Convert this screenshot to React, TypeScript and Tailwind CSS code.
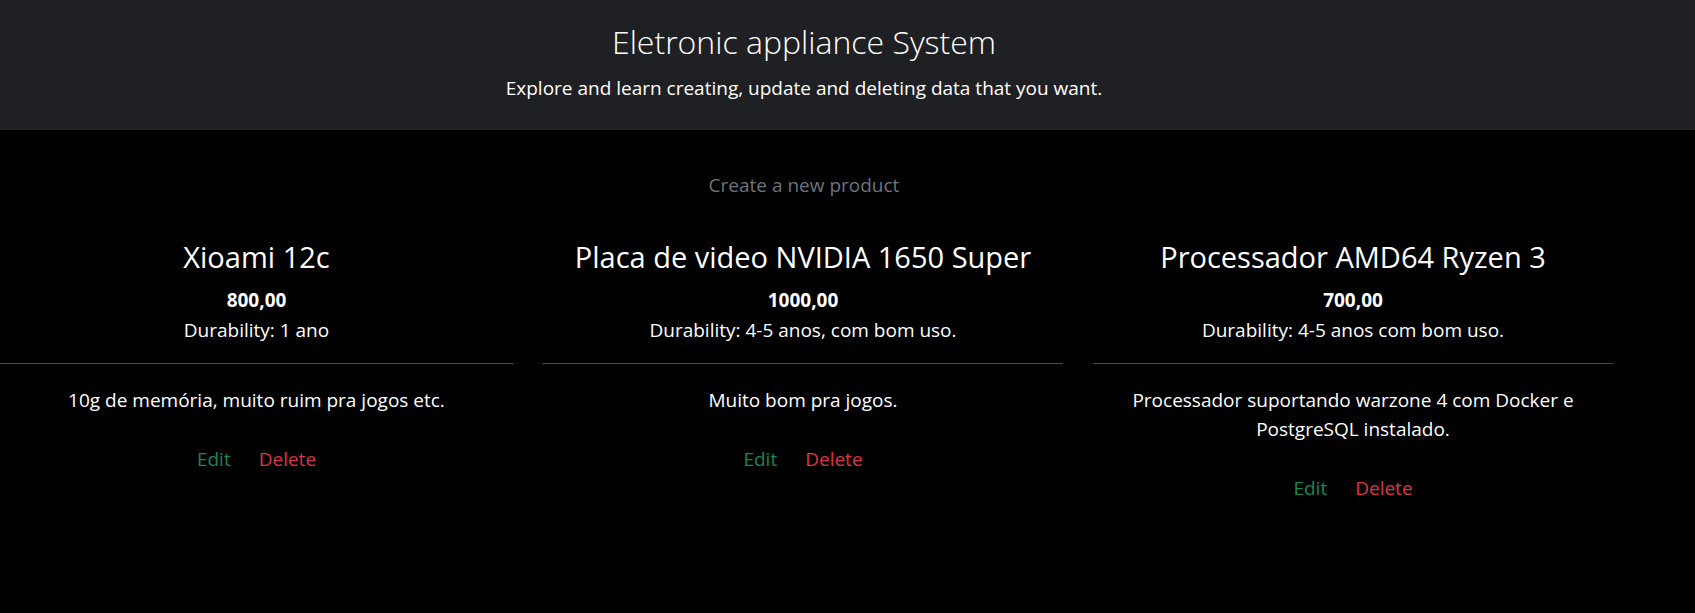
import React from "react";

interface Product {
  name: string;
  price: string;
  durability: string;
  description: string;
}

const products: Product[] = [
  {
    name: "Xioami 12c",
    price: "800,00",
    durability: "1 ano",
    description: "10g de memória, muito ruim pra jogos etc.",
  },
  {
    name: "Placa de video NVIDIA 1650 Super",
    price: "1000,00",
    durability: "4-5 anos, com bom uso.",
    description: "Muito bom pra jogos.",
  },
  {
    name: "Processador AMD64 Ryzen 3",
    price: "700,00",
    durability: "4-5 anos com bom uso.",
    description:
      "Processador suportando warzone 4 com Docker e PostgreSQL instalado.",
  },
];

const ProductCard = ({ product }: { product: Product }) => (
  <div className="flex flex-col text-center text-white">
    <h3 className="mt-[38px] text-[29px] leading-[40px] font-normal">
      {product.name}
    </h3>
    <p className="mt-[10px] text-[19px] leading-[26px] font-bold">
      {product.price}
    </p>
    <p className="mt-[4px] text-[19px] leading-[26px]">
      Durability: {product.durability}
    </p>
    <hr className="mt-[20px] border-0 border-t border-[#4b4b4b]" />
    <p className="mt-[22px] px-4 text-[19px] leading-[29px]">
      {product.description}
    </p>
    <div className="mt-[30px] flex justify-center gap-[28px] text-[19px] leading-[28px]">
      <a href="#" className="text-[#198754]">
        Edit
      </a>
      <a href="#" className="text-[#dc3545]">
        Delete
      </a>
    </div>
  </div>
);

export default function App() {
  return (
    <div className="min-h-[613px] bg-black font-['Open_Sans',sans-serif]">
      <header className="h-[130px] bg-[#1f2023]">
        <div className="w-[1608px] pt-[18px] text-center text-white">
          <h1 className="text-[32px] leading-[48px] font-light">
            Eletronic appliance System
          </h1>
          <p className="mt-[8px] text-[19px] leading-[28px]">
            Explore and learn creating, update and deleting data that you want.
          </p>
        </div>
      </header>
      <main className="w-[1608px]">
        <div className="mt-[41px] text-center">
          <a href="#" className="text-[19px] leading-[28px] text-[#6c757d]">
            Create a new product
          </a>
        </div>
        <div className="grid grid-cols-[513px_520px_520px] gap-x-[30px]">
          {products.map((product, i) => (
            <ProductCard key={i} product={product} />
          ))}
        </div>
      </main>
    </div>
  );
}
